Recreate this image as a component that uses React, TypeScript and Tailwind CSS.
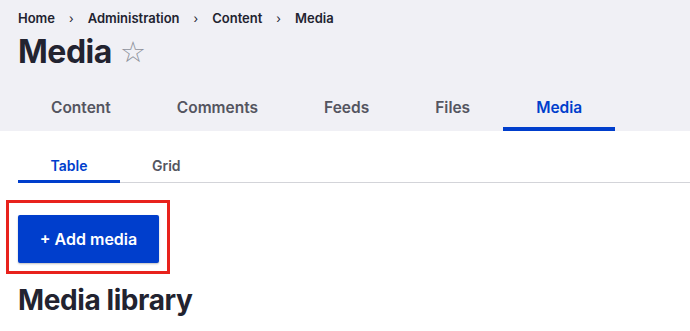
export default function App() {
  const tabs = ["Content", "Comments", "Feeds", "Files", "Media"];
  const crumbs = ["Home", "Administration", "Content", "Media"];

  return (
    <div className="min-h-screen bg-white text-[#222330] font-['Inter','Liberation_Sans',sans-serif]">
      <div className="bg-[#f0f0f5] px-[18px] pt-[10px]">
        <nav className="flex items-center text-[13px] font-semibold leading-[17px] text-[#222330]">
          {crumbs.map((c, i) => (
            <span key={c} className="flex items-center">
              {i > 0 && <span className="mx-[14px] text-[12px] font-normal">›</span>}
              {c}
            </span>
          ))}
        </nav>
        <div className="flex items-center mt-[5px] h-[40px]">
          <h1 className="text-[32px] font-bold tracking-[-0.5px] leading-none">Media</h1>
          <span className="ml-[8px] text-[29px] leading-none text-[#8e929c] font-['DejaVu_Sans',sans-serif] font-light">☆</span>
        </div>
        <div className="flex mt-[13px]">
          {tabs.map((t) => (
            <div
              key={t}
              className={`px-[33px] pt-[4px] h-[46px] flex items-center text-[15.5px] font-semibold border-b-[4px] ${
                t === "Media" ? "text-[#003ecc] border-[#003ecc]" : "text-[#545560] border-transparent"
              }`}
            >
              {t}
            </div>
          ))}
        </div>
      </div>

      <div className="pl-[18px]">
        <div className="flex border-b border-[#d3d4d9] mt-[16px]">
          <div className="px-[32px] pt-[3px] w-[102px] h-[36px] flex items-center justify-center text-[14px] font-semibold text-[#003ecc] border-b-[3px] border-[#003ecc] -mb-px">
            Table
          </div>
          <div className="px-[32px] pt-[3px] h-[36px] flex items-center text-[14px] font-semibold text-[#545560] border-b-[3px] border-transparent -mb-px">
            Grid
          </div>
        </div>
      </div>

      <div className="px-[18px]">
        <div className="mt-[17px] -ml-[12px] w-[164px] border-[3px] border-[#e8221c] pl-[9px] pr-[8px] pt-[12px] pb-[8px]">
          <button className="w-[141px] h-[48px] rounded-[2px] bg-[#003ecc] text-white text-[16px] font-semibold shadow-[0_1px_2px_rgba(0,0,0,0.25)]">
            + Add media
          </button>
        </div>

        <h2 className="mt-[9px] text-[28px] font-bold tracking-[-0.4px] leading-[34px]">Media library</h2>
      </div>
    </div>
  );
}
